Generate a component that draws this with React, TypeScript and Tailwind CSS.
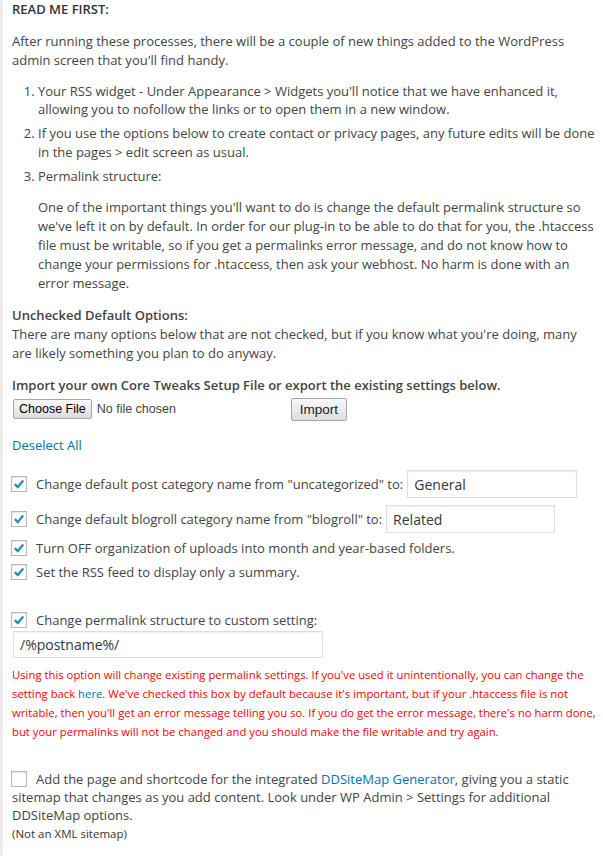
import React from "react";

function Check({ checked = true }: { checked?: boolean }) {
  return (
    <span className="inline-flex h-[16px] w-[16px] shrink-0 items-center justify-center border border-[#b4b9be] bg-white shadow-[inset_0_1px_2px_rgba(0,0,0,0.1)]">
      {checked && (
        <svg width="14" height="14" viewBox="0 0 16 16" className="block">
          <path d="M3.2 8.2 L6.6 11.6 L12.8 4" fill="none" stroke="#1e8cbe" strokeWidth="2.6" strokeLinecap="butt" strokeLinejoin="miter" />
        </svg>
      )}
    </span>
  );
}

function TextBox({ value, w }: { value: string; w: string }) {
  return (
    <div
      className={`flex h-[28px] items-center border border-[#ddd] bg-white px-[6px] text-[14px] text-[#32373c] shadow-[inset_0_1px_2px_rgba(0,0,0,0.07)] ${w}`}
    >
      {value}
    </div>
  );
}

export default function App() {
  return (
    <div className="min-h-screen border-l-[3px] border-[#ebebeb] bg-white pl-[9px] pr-[7px] font-['Open_Sans',sans-serif] text-[13px] leading-[19px] text-[#444]">
      <p className="font-semibold text-[#333]">READ ME FIRST:</p>
      <p className="mt-[13px]">
        After running these processes, there will be a couple of new things added to the WordPress admin screen that
        you'll find handy.
      </p>
      <ol className="ml-[26px] mt-[12px] list-decimal leading-[18.2px]">
        <li className="mb-[6px]">
          Your RSS widget - Under Appearance &gt; Widgets you'll notice that we have enhanced it, allowing you to
          nofollow the links or to open them in a new window.
        </li>
        <li className="mb-[6px]">
          If you use the options below to create contact or privacy pages, any future edits will be done in the pages
          &gt; edit screen as usual.
        </li>
        <li>
          Permalink structure:
          <p className="mt-[13px] leading-[19px]">
            One of the important things you'll want to do is change the default permalink structure so we've left it on
            by default. In order for our plug-in to be able to do that for you, the .htaccess file must be writable, so
            if you get a permalinks error message, and do not know how to change your permissions for .htaccess, then
            ask your webhost. No harm is done with an error message.
          </p>
        </li>
      </ol>
      <p className="mt-[13px]">
        <span className="font-semibold">Unchecked Default Options:</span>
        <br />
        There are many options below that are not checked, but if you know what you're doing, many are likely something
        you plan to do anyway.
      </p>
      <div className="mt-[13px]">
        <div className="font-semibold">Import your own Core Tweaks Setup File or export the existing settings below.</div>
        <div className="flex h-[28px] items-center">
          <div className="flex w-[275px] items-center font-['Liberation_Sans',Arial,sans-serif] text-[12.5px]">
            <span className="ml-[1px] flex h-[20px] items-center rounded-[2px] border border-[#a6a6a6] bg-gradient-to-b from-[#fafafa] to-[#dcdcdc] px-[5px] text-[#000]">
              Choose File
            </span>
            <span className="ml-[5px] text-[#444]">No file chosen</span>
          </div>
          <span className="ml-[4px] flex h-[23px] w-[56px] items-center justify-center rounded-[2px] border border-[#a6a6a6] bg-gradient-to-b from-[#f8f8f8] to-[#dedede] font-['Liberation_Sans',Arial,sans-serif] text-[13.5px] text-[#222]">
            Import
          </span>
        </div>
      </div>
      <div className="mt-[13px] text-[#0073aa]">Deselect All</div>

      <div className="-ml-[1px] mt-[15px] flex h-[28px] items-center">
        <Check />
        <span className="ml-[9px]">Change default post category name from "uncategorized" to:</span>
        <TextBox value="General" w="ml-[4px] w-[170px]" />
      </div>
      <div className="-ml-[1px] mt-[7px] flex h-[28px] items-center">
        <Check />
        <span className="ml-[9px]">Change default blogroll category name from "blogroll" to:</span>
        <TextBox value="Related" w="ml-[4px] w-[169px]" />
      </div>
      <div className="-ml-[1px] mt-[3px] flex h-[24px] items-center">
        <Check />
        <span className="ml-[9px]">Turn OFF organization of uploads into month and year-based folders.</span>
      </div>
      <div className="-ml-[1px] flex h-[24px] items-center">
        <Check />
        <span className="ml-[9px]">Set the RSS feed to display only a summary.</span>
      </div>

      <div className="-ml-[1px] mt-[25px] flex h-[22px] items-center">
        <Check />
        <span className="ml-[9px]">Change permalink structure to custom setting:</span>
      </div>
      <div className="ml-[1px] flex h-[27px] w-[310px] items-center border border-[#ddd] bg-white px-[6px] text-[14px] text-[#32373c] shadow-[inset_0_1px_2px_rgba(0,0,0,0.07)]">
        /%postname%/
      </div>
      <p className="-mr-[6px] mt-[7px] text-[11.3px] leading-[19px] text-[#ff0000]">
        Using this option will change existing permalink settings. If you've used it unintentionally, you can change the
        setting back <span className="text-[#0073aa]">here</span>. We've checked this box by default because it's
        important, but if your .htaccess file is not writable, then you'll get an error message telling you so. If you
        do get the error message, there's no harm done, but your permalinks will not be changed and you should make the
        file writable and try again.
      </p>

      <div className="mt-[29px] leading-[18.2px]">
        <span className="-ml-[1px] mr-[9px] inline-flex align-[-3px]">
          <Check checked={false} />
        </span>
        Add the page and shortcode for the integrated <span className="text-[#0073aa]">DDSiteMap Generator</span>, giving
        you a static sitemap that changes as you add content. Look under WP Admin &gt; Settings for additional DDSiteMap
        options.
      </div>
      <div className="text-[11.5px] leading-[18px] text-[#333]">(Not an XML sitemap)</div>
    </div>
  );
}
